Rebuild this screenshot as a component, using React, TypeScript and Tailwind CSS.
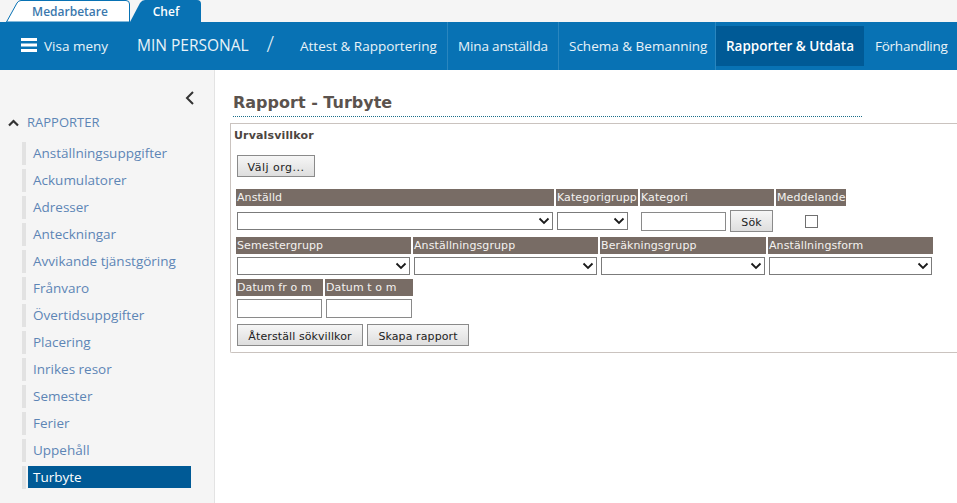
import React from "react";

const SEGOE = "font-['Open_Sans','Noto_Sans',sans-serif]";
const VERD = "font-['DejaVu_Sans',sans-serif]";

const sideItems = ["Anställningsuppgifter","Ackumulatorer","Adresser","Anteckningar","Avvikande tjänstgöring","Frånvaro","Övertidsuppgifter","Placering","Inrikes resor","Semester","Ferier","Uppehåll"];
const navItems = [
  { t: "Attest & Rapportering", w: "w-[158px]", s: "" },
  { t: "Mina anställda", w: "w-[111px]", s: "tracking-[-0.15px]" },
  { t: "Schema & Bemanning", w: "w-[157px]", s: "" },
];

function Label({ w, children }: { w: string; children: React.ReactNode }) {
  return <div className={`${w} h-[17px] bg-[#786c65] text-[#f4f2f0] text-[11px] leading-[18px] pl-px whitespace-nowrap overflow-hidden tracking-[0.1px]`}>{children}</div>;
}

function Select({ w }: { w: string }) {
  return (
    <div className={`${w} h-[18px] border border-[#7b7b7b] bg-white flex items-center justify-end pr-[2px]`}>
      <svg width="12" height="8" viewBox="0 0 12 8" fill="none" stroke="#1a1a1a" strokeWidth="1.8"><path d="M1.5 1.5 6 6l4.5-4.5" /></svg>
    </div>
  );
}

function Btn({ w, s, children }: { w: string; s?: string; children: React.ReactNode }) {
  return <button className={`${w} ${s ?? "tracking-[0.1px]"} h-[22px] border border-[#8a8a8a] bg-gradient-to-b from-[#f6f6f6] to-[#dedede] text-[#222] text-[11px] pt-[2px] leading-[20px] text-center`}>{children}</button>;
}

export default function App() {
  return (
    <div className={`w-[957px] h-[503px] overflow-hidden bg-white flex flex-col ${SEGOE}`}>
      <div className="h-[22px] bg-[#f5f5f5] flex items-end pl-[6px] shrink-0">
        <div className="relative w-[124px] h-[22px] text-center text-[#3b78ad] text-[12px] font-semibold leading-[23px] pl-[4px]">
          <svg className="absolute inset-0" width="124" height="22" viewBox="0 0 124 22" fill="none">
            <path d="M0.5 22 L11 3 Q12.5 0.5 15 0.5 H120 Q123.5 0.5 123.5 4 V22 Z" fill="#fff" stroke="#0872b4" strokeWidth="1" />
          </svg>
          <span className="relative">Medarbetare</span>
        </div>
        <div className="relative w-[71px] h-[22px] text-center text-white text-[12px] font-semibold leading-[23px] pl-[1px]">
          <svg className="absolute inset-0" width="71" height="22" viewBox="0 0 71 22">
            <path d="M0 22 L10 3 Q12 0 15 0 H67 Q71 0 71 4 V22 Z" fill="#0872b4" />
          </svg>
          <span className="relative">Chef</span>
        </div>
      </div>

      <div className="h-[48px] bg-[#0872b4] flex items-stretch text-[#e8f2f8] text-[13.5px] shrink-0">
        <div className="w-[125px] flex items-center pl-[21px]">
          <svg width="16" height="14" viewBox="0 0 16 14" fill="#fff" className="mr-[7px] mb-[2px]"><rect y="0" width="16" height="3" /><rect y="5.5" width="16" height="3" /><rect y="11" width="16" height="3" /></svg>
          <span className="whitespace-nowrap">Visa meny</span>
        </div>
        <div className="w-[165px] pl-[12px] flex items-center text-[15.5px] whitespace-nowrap">
          <span>MIN PERSONAL</span>
          <span className="ml-[18px] text-[22px] font-light mb-[6px]">/</span>
        </div>
        <div className="flex items-stretch">
          {navItems.map((n) => (
            <div key={n.t} className={`${n.w} ${n.s} pl-[10px] flex items-center border-r border-[#2a86bf] whitespace-nowrap`}>{n.t}</div>
          ))}
          <div className="w-[148px] mt-[4px] h-[40px] bg-[#005a96] flex items-center justify-center font-semibold text-white whitespace-nowrap">Rapporter &amp; Utdata</div>
          <div className="pl-[11px] flex items-center whitespace-nowrap tracking-[-0.25px]">Förhandling</div>
        </div>
      </div>

      <div className="flex flex-1 min-h-0">
        <aside className="w-[215px] shrink-0 bg-[#f5f5f5] border-r border-[#e3e3e3] flex flex-col">
          <div className="h-[41px] flex items-end justify-end pr-[19px] pb-[5px]">
            <svg width="10" height="16" viewBox="0 0 10 16" fill="none" stroke="#333" strokeWidth="2"><path d="M8 2 2 8l6 6" /></svg>
          </div>
          <div className="h-[22px] mt-[1px] flex items-center pl-[8px] text-[#5d85b5] text-[13px]">
            <svg width="11" height="8" viewBox="0 0 11 8" fill="none" stroke="#333" strokeWidth="2.2" className="mr-[8px]"><path d="M1 6.5 5.5 2 10 6.5" /></svg>
            RAPPORTER
          </div>
          <ul className="mt-[8px] pl-[22px] flex flex-col gap-[4px] text-[13.5px] text-[#5d85b5]">
            {sideItems.map((s) => (
              <li key={s} className="h-[23px] border-l-[4px] border-[#e2e2e2] pl-[7px] leading-[22px] whitespace-nowrap">{s}</li>
            ))}
            <li className="h-[23px] border-l-[4px] border-[#e2e2e2] pl-[2px] whitespace-nowrap">
              <div className="w-[163px] h-[22px] bg-[#005a96] text-white pl-[5px] leading-[22px]">Turbyte</div>
            </li>
          </ul>
        </aside>

        <main className={`flex-1 min-w-0 pl-[15px] pt-[20px] ${VERD} overflow-hidden`}>
          <h1 className="ml-[3px] w-[629px] h-[27px] text-[16px] font-bold text-[#5b534e] leading-[25px] border-b border-dotted border-[#1b6f8a]">Rapport - Turbyte</h1>
          <section className="mt-[6px] w-[760px] h-[230px] border border-[#cac3bf] border-r-0 rounded-bl-[2px] pl-[5px]">
            <div className="-ml-[2px] mt-[5px] text-[11px] font-bold leading-[14px] text-[#4d4540] tracking-[0.15px]">Urvalsvillkor</div>
            <div className="mt-[12px] ml-[1px] flex"><Btn w="w-[78px]" s="tracking-[0.5px]">Välj org...</Btn></div>

            <div className="mt-[12px] flex gap-[2px]">
              <Label w="w-[318px]">Anställd</Label>
              <Label w="w-[82px]">Kategorigrupp</Label>
              <Label w="w-[134px]">Kategori</Label>
              <Label w="w-[70px]">Meddelande</Label>
            </div>
            <div className="h-[30px] ml-[1px] flex items-center">
              <Select w="w-[316px]" />
              <div className="ml-[4px]"><Select w="w-[71px]" /></div>
              <div className="ml-[13px] w-[85px] h-[19px] border border-[#8a8a8a] bg-white"></div>
              <div className="ml-[4px] flex"><Btn w="w-[43px]">Sök</Btn></div>
              <div className="ml-[32px] w-[13px] h-[13px] border border-[#707070] bg-white"></div>
            </div>
            <div className="mt-[1px] flex gap-[2px]">
              <Label w="w-[175px]">Semestergrupp</Label>
              <Label w="w-[185px]">Anställningsgrupp</Label>
              <Label w="w-[166px]">Beräkningsgrupp</Label>
              <Label w="w-[165px]">Anställningsform</Label>
            </div>
            <div className="mt-[3px] ml-[1px] flex gap-[4px]">
              <Select w="w-[173px]" />
              <Select w="w-[183px]" />
              <Select w="w-[164px]" />
              <Select w="w-[163px]" />
            </div>
            <div className="mt-[4px] flex gap-[2px]">
              <Label w="w-[87px]">Datum fr o m</Label>
              <Label w="w-[88px]">Datum t o m</Label>
            </div>
            <div className="mt-[3px] ml-[1px] flex gap-[4px]">
              <div className="w-[85px] h-[19px] border border-[#8a8a8a] bg-white"></div>
              <div className="w-[86px] h-[19px] border border-[#8a8a8a] bg-white"></div>
            </div>
            <div className="mt-[6px] ml-[1px] flex gap-[4px]">
              <Btn w="w-[126px]">Återställ sökvillkor</Btn>
              <Btn w="w-[102px]">Skapa rapport</Btn>
            </div>
          </section>
        </main>
      </div>
    </div>
  );
}
